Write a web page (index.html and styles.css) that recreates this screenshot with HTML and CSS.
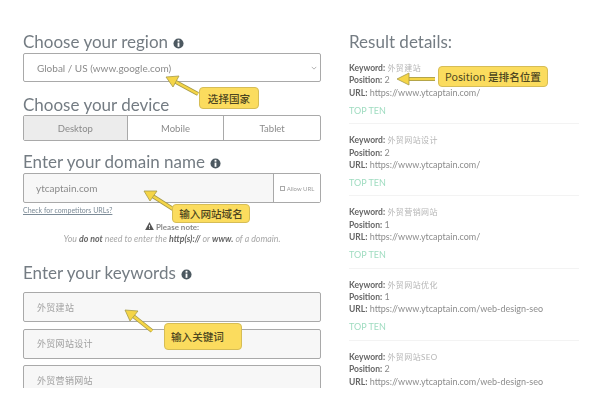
FILE: index.html
```html
<!DOCTYPE html>
<html lang="en">
<head>
    <meta charset="UTF-8">
    <meta name="viewport" content="width=device-width, initial-scale=1.0">
    <title>Rank checker</title>
    <link rel="stylesheet" href="styles.css">
</head>
<body>
    <div class="page">
        <div class="form-col">
            <h2 class="first">Choose your region
                <svg class="info" viewBox="0 0 12 12"><circle cx="6" cy="6" r="5.5"/><rect x="5" y="2" width="2" height="2" fill="#fff"/><rect x="5" y="5" width="2" height="4.6" fill="#fff"/></svg>
            </h2>
            <div class="field select">
                <span>Global / US (www.google.com)</span>
                <svg class="chevron" viewBox="0 0 8 5"><path d="M1 1l3 3 3-3" fill="none" stroke="#999" stroke-width="1"/></svg>
            </div>

            <h2 class="device">Choose your device</h2>
            <div class="device-tabs">
                <div class="tab active">Desktop</div>
                <div class="tab">Mobile</div>
                <div class="tab">Tablet</div>
            </div>

            <h2 class="domain">Enter your domain name
                <svg class="info" viewBox="0 0 12 12"><circle cx="6" cy="6" r="5.5"/><rect x="5" y="2" width="2" height="2" fill="#fff"/><rect x="5" y="5" width="2" height="4.6" fill="#fff"/></svg>
            </h2>
            <div class="field domain-field">
                <span class="domain-value">ytcaptain.com</span>
                <span class="allow-url"><i></i>Allow URL</span>
            </div>
            <a class="competitors" href="#">Check for competitors URLs?</a>
            <div class="note">
                <div class="note-title">
                    <svg class="warn" viewBox="0 0 12 11"><path d="M6 0L12 11H0z" fill="#555"/><rect x="5.4" y="4" width="1.2" height="3.6" fill="#fff"/><rect x="5.4" y="8.4" width="1.2" height="1.2" fill="#fff"/></svg>
                    <b>Please note:</b>
                </div>
                <div class="note-text">You <b>do not</b> need to enter the <b>http(s)://</b> or <b>www.</b> of a domain.</div>
            </div>

            <h2 class="keywords">Enter your keywords
                <svg class="info" viewBox="0 0 12 12"><circle cx="6" cy="6" r="5.5"/><rect x="5" y="2" width="2" height="2" fill="#fff"/><rect x="5" y="5" width="2" height="4.6" fill="#fff"/></svg>
            </h2>
            <div class="field keyword">外贸建站</div>
            <div class="field keyword">外贸网站设计</div>
            <div class="field keyword">外贸营销网站</div>
        </div>

        <div class="result-col">
            <h2 class="first">Result details:</h2>
            <div class="result">
                <p><b>Keyword:</b> <span class="kw">外贸建站</span></p>
                <p><b>Position:</b> 2</p>
                <p><b>URL:</b> https://www.ytcaptain.com/</p>
                <p class="top-ten">TOP TEN</p>
            </div>
            <div class="result">
                <p><b>Keyword:</b> <span class="kw">外贸网站设计</span></p>
                <p><b>Position:</b> 2</p>
                <p><b>URL:</b> https://www.ytcaptain.com/</p>
                <p class="top-ten">TOP TEN</p>
            </div>
            <div class="result">
                <p><b>Keyword:</b> <span class="kw">外贸营销网站</span></p>
                <p><b>Position:</b> 1</p>
                <p><b>URL:</b> https://www.ytcaptain.com/</p>
                <p class="top-ten">TOP TEN</p>
            </div>
            <div class="result">
                <p><b>Keyword:</b> <span class="kw">外贸网站优化</span></p>
                <p><b>Position:</b> 1</p>
                <p><b>URL:</b> https://www.ytcaptain.com/web-design-seo</p>
                <p class="top-ten">TOP TEN</p>
            </div>
            <div class="result">
                <p><b>Keyword:</b> <span class="kw">外贸网站SEO</span></p>
                <p><b>Position:</b> 2</p>
                <p><b>URL:</b> https://www.ytcaptain.com/web-design-seo</p>
            </div>
        </div>
    </div>

    <!-- yellow callouts drawn over the screenshot -->
    <svg class="arrows" viewBox="0 0 602 404">
        <g class="arrow">
            <path class="shaft-edge" d="M198 94L174 81"/>
            <path class="shaft" d="M198 94L174 81"/>
            <path d="M166 77L179 76L173 87z"/>
        </g>
        <g class="arrow">
            <path class="shaft-edge" d="M173 209L151 195"/>
            <path class="shaft" d="M173 209L151 195"/>
            <path d="M144 191L157 191L150 201z"/>
        </g>
        <g class="arrow">
            <path class="shaft-edge" d="M152 331L132 315"/>
            <path class="shaft" d="M152 331L132 315"/>
            <path d="M125 310L138 311L130 321z"/>
        </g>
        <g class="arrow">
            <path class="shaft-edge" d="M435 79L405 79"/>
            <path class="shaft" d="M435 79L405 79"/>
            <path d="M397 79L409 73L409 85z"/>
        </g>
    </svg>
    <div class="callout region-tip">选择国家</div>
    <div class="callout domain-tip">输入网站域名</div>
    <div class="callout keyword-tip">输入关键词</div>
    <div class="callout position-tip"><span class="latin">Position</span>&nbsp;是排名位置</div>
</body>
</html>
```

FILE: styles.css
```css
body {
    margin: 0;
    background: #fff;
    font-family: "Lato", "Noto Sans CJK SC", sans-serif;
    color: #777;
    filter: blur(0.6px);
}

.page {
    display: flex;
    gap: 28px;
    height: 388px;
    padding-left: 23px;
    overflow: hidden;
}

h2 {
    margin: 0;
    font-size: 17px;
    font-weight: 400;
    line-height: 20px;
    color: #747c83;
}

h2.first {
    margin-top: 32px;
}

.info {
    width: 11px;
    height: 11px;
    vertical-align: -1px;
    margin-left: 1px;
    fill: #4c5860;
}

.form-col {
    width: 298px;
    flex-shrink: 0;
}

.field {
    box-sizing: border-box;
    display: flex;
    align-items: center;
    border: 1px solid #a9a9a9;
    border-radius: 2px;
    font-size: 10px;
    color: #8b8b8b;
}

.select {
    height: 29px;
    margin-top: 1px;
    padding: 0 3px 0 13px;
    justify-content: space-between;
}

.chevron {
    width: 6px;
    height: 4px;
}

h2.device {
    margin-top: 13px;
}

.device-tabs {
    display: flex;
    height: 26px;
    box-sizing: border-box;
    border: 1px solid #a9a9a9;
    border-radius: 2px;
}

.tab {
    flex: 96;
    display: flex;
    align-items: center;
    justify-content: center;
    font-size: 9.5px;
    color: #8b8b8b;
    border-left: 1px solid #a9a9a9;
}

.tab:first-child {
    border-left: 0;
}

.tab.active {
    flex: 103;
    background: #ececec;
}

h2.domain {
    margin-top: 11px;
}

.domain-field {
    height: 30px;
    margin-top: 1px;
    background: #f7f7f7;
}

.domain-value {
    flex: 1;
    padding-left: 12px;
}

.allow-url {
    display: flex;
    align-items: center;
    justify-content: center;
    gap: 2px;
    width: 46px;
    height: 100%;
    border-left: 1px solid #a9a9a9;
    background: #fff;
    font-size: 6px;
    color: #a0a0a0;
}

.allow-url i {
    width: 3px;
    height: 3px;
    border: 1px solid #aaa;
}

.competitors {
    display: block;
    margin-top: 3px;
    font-size: 7px;
    line-height: 8px;
    color: #7b8a96;
}

.note {
    margin-top: 7px;
    font-size: 8px;
    line-height: 12px;
    text-align: center;
    color: #a8a8a8;
}

.note-title b {
    color: #8a8a8a;
}

.warn {
    width: 9px;
    height: 8px;
}

.note-text {
    font-size: 8.8px;
    font-style: italic;
}

.note-text b {
    color: #666;
}

h2.keywords {
    margin-top: 18px;
}

.keyword {
    height: 30px;
    margin: 6.5px 0 0;
    padding-left: 13px;
    background: #f7f7f7;
    font-size: 9px;
    letter-spacing: 0.3px;
    color: #a0a0a0;
}

.keywords + .keyword {
    margin-top: 9px;
}

.result-col {
    flex: 1;
    padding-right: 23px;
}

.result {
    margin-top: 10px;
    padding-bottom: 6px;
    border-bottom: 1px solid #f3f3f3;
}

.result:last-child {
    border-bottom: 0;
}

.result p {
    margin: 0;
    font-size: 9px;
    line-height: 12.4px;
    color: #8c8c8c;
}

.result b {
    font-size: 8.5px;
    color: #666;
}

.result .kw {
    font-size: 8px;
    letter-spacing: 0.4px;
    color: #b5b5b5;
}

.result .top-ten {
    margin-top: 5.6px;
    color: #9fdcc0;
}

.arrows {
    position: absolute;
    top: 0;
    left: 0;
    width: 602px;
    height: 404px;
    pointer-events: none;
}

.arrow path {
    fill: #f5d547;
    stroke: #a59a4a;
    stroke-width: 0.8;
}

.arrow .shaft-edge {
    fill: none;
    stroke: #a59a4a;
    stroke-width: 4;
}

.arrow .shaft {
    fill: none;
    stroke: #f5d547;
    stroke-width: 2.4;
}

.callout {
    position: absolute;
    box-sizing: border-box;
    display: flex;
    align-items: center;
    justify-content: center;
    background: #fbdc5e;
    border: 1px solid #d6bd56;
    border-radius: 4px;
    font-family: "Noto Sans CJK SC", sans-serif;
    font-size: 10.6px;
    font-weight: 500;
    color: #4d4620;
}

.callout .latin {
    font-weight: 400;
}

.region-tip {
    left: 199px;
    top: 87px;
    width: 60px;
    height: 22px;
}

.domain-tip {
    left: 172px;
    top: 204px;
    width: 78px;
    height: 19px;
}

.keyword-tip {
    left: 164px;
    top: 323px;
    width: 78px;
    height: 27px;
    justify-content: flex-start;
    padding-left: 6px;
}

.position-tip {
    left: 438px;
    top: 66px;
    width: 110px;
    height: 21px;
}
```
